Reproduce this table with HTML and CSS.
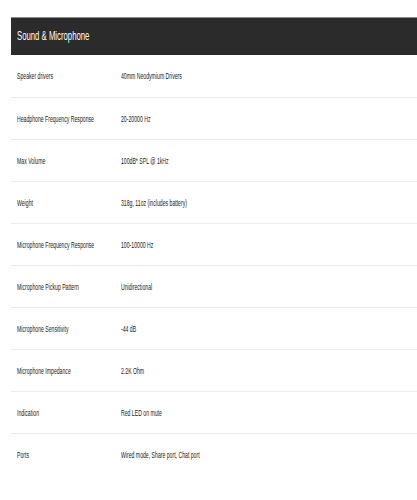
FILE: index.html
```html
<!DOCTYPE html>
<html>
<head>
<meta charset="utf-8">
<link rel="stylesheet" href="styles.css">
</head>
<body>
<section class="specs">
  <h2 class="specs-title"><span class="sq">Sound &amp; Microphone</span></h2>
  <div class="spec-row first"><span class="label"><span class="sq">Speaker drivers</span></span><span class="value"><span class="sq">40mm Neodymium Drivers</span></span></div>
  <div class="spec-row"><span class="label"><span class="sq">Headphone Frequency Response</span></span><span class="value"><span class="sq">20-20000 Hz</span></span></div>
  <div class="spec-row"><span class="label"><span class="sq">Max Volume</span></span><span class="value"><span class="sq">100dB* SPL @ 1kHz</span></span></div>
  <div class="spec-row"><span class="label"><span class="sq">Weight</span></span><span class="value"><span class="sq">318g, 11oz (includes battery)</span></span></div>
  <div class="spec-row"><span class="label"><span class="sq">Microphone Frequency Response</span></span><span class="value"><span class="sq">100-10000 Hz</span></span></div>
  <div class="spec-row"><span class="label"><span class="sq">Microphone Pickup Pattern</span></span><span class="value"><span class="sq">Unidirectional</span></span></div>
  <div class="spec-row"><span class="label"><span class="sq">Microphone Sensitivity</span></span><span class="value"><span class="sq">-44 dB</span></span></div>
  <div class="spec-row"><span class="label"><span class="sq">Microphone Impedance</span></span><span class="value"><span class="sq">2.2K Ohm</span></span></div>
  <div class="spec-row"><span class="label"><span class="sq">Indication</span></span><span class="value"><span class="sq">Red LED on mute</span></span></div>
  <div class="spec-row last"><span class="label"><span class="sq">Ports</span></span><span class="value"><span class="sq">Wired mode, Share port, Chat port</span></span></div>
</section>
</body>
</html>
```
FILE: styles.css
```css
html, body {
  margin: 0;
  padding: 0;
  background: #ffffff;
}
body {
  font-family: "Liberation Sans", Arial, sans-serif;
  color: #222222;
  overflow: hidden;
}
.specs {
  margin: 17px 0 0 11px;
}
.sq {
  display: inline-block;
  white-space: nowrap;
  transform: scaleX(0.62);
  transform-origin: left center;
}
.specs-title {
  margin: 0;
  height: 38px;
  box-sizing: border-box;
  background: #2b2b2b;
  border-top: 1px solid #8a8a8a;
  color: #ffffff;
  font-size: 12.5px;
  font-weight: normal;
  line-height: 36px;
  padding-left: 6px;
}
.spec-row {
  display: grid;
  grid-template-columns: 104px 1fr;
  align-items: center;
  height: 42px;
  padding-left: 6px;
  font-size: 8.3px;
  border-bottom: 1px solid #ececec;
  box-sizing: border-box;
}
.spec-row.first {
  height: 43px;
}
.spec-row.last {
  border-bottom: none;
}
.label, .value {
  color: #222222;
}
```
